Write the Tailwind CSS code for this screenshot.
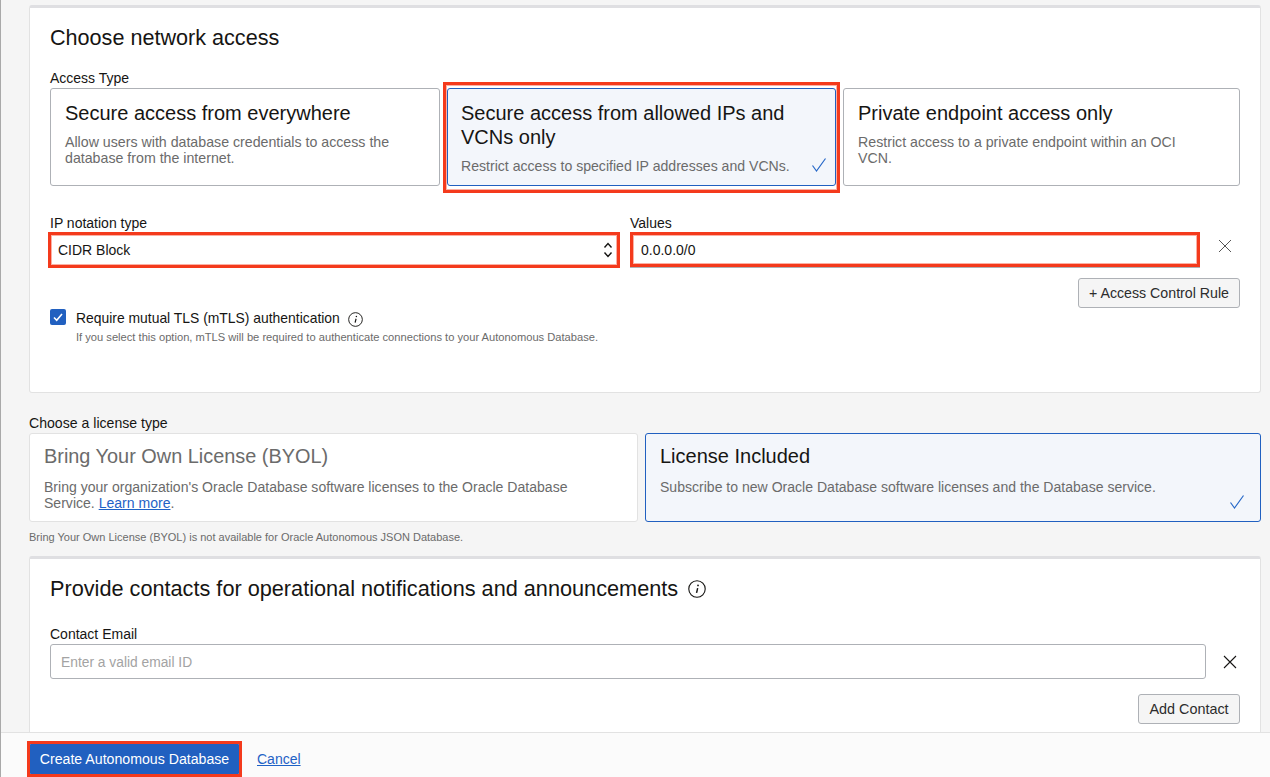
<!DOCTYPE html>
<html lang="en">
<head>
    <meta charset="UTF-8">
    <title>Create Autonomous Database</title>
    <script src="https://cdn.jsdelivr.net/npm/@tailwindcss/browser@4"></script>
</head>
<body class="bg-[#f5f5f5] font-['Liberation_Sans',Arial,sans-serif] text-[#161513]">
    <div class="h-[777px] flex flex-col overflow-hidden border-l border-[#a9a9a9]">
        <main class="flex-1 overflow-hidden pl-[28px] w-[1260px]">
            <!-- Network access -->
            <section class="mt-[5px] h-[388px] bg-white border border-[#e2e2e2] border-t-[3px] border-t-[#dfdfe2] rounded-[3px] px-[20px]">
                <h2 class="mt-[18px] text-[21.6px] leading-[24px]">Choose network access</h2>
                <div class="mt-[19px] text-[14px] leading-[18px]">Access Type</div>
                <div class="mt-px grid grid-cols-[390px_389px_397px] gap-[7px]">
                    <div class="h-[98px] bg-white border border-[#aeb1b6] rounded-[3px] px-[14px] pt-[12px]">
                        <div class="text-[20px] leading-[24px]">Secure access from everywhere</div>
                        <p class="mt-[9px] text-[14.2px] leading-[16px] text-[#6b6b6b]">Allow users with database credentials to access the database from the internet.</p>
                    </div>
                    <div class="relative h-[98px] bg-[#f3f6fb] border border-[#2160c0] rounded-[3px] pl-[13px] pr-[14px] pt-[12px]">
                        <div class="text-[20px] leading-[24px]">Secure access from allowed IPs and VCNs only</div>
                        <p class="mt-[9px] text-[14.1px] leading-[16px] text-[#6b6b6b]">Restrict access to specified IP addresses and VCNs.</p>
                        <svg class="absolute right-[8px] bottom-[12px] w-[16px] h-[16px]" viewBox="0 0 16 16" fill="none" stroke="#2668c8" stroke-width="1.2"><path d="M1.5 8.5l4 5.5L14.5 1.5"/></svg>
                        <span class="absolute -left-[5px] -right-[5px] -top-[7px] -bottom-[8px] border-[3px] border-[#f43a1c] shadow-[inset_0_0_0_1px_#f43a1c66]"></span>
                    </div>
                    <div class="h-[98px] bg-white border border-[#aeb1b6] rounded-[3px] px-[14px] pt-[12px]">
                        <div class="text-[20px] leading-[24px]">Private endpoint access only</div>
                        <p class="mt-[9px] text-[14.2px] leading-[16px] text-[#6b6b6b] w-[330px]">Restrict access to a private endpoint within an OCI VCN.</p>
                    </div>
                </div>

                <div class="mt-[28px] grid grid-cols-[566px_570px_1fr] gap-x-[14px]">
                    <div>
                        <div class="text-[14px] leading-[18px]">IP notation type</div>
                        <div class="relative mt-[3px] h-[30px] flex items-center justify-between pl-[8px] pr-[3px] text-[14px]">
                            <span>CIDR Block</span>
                            <svg class="w-[10px] h-[18px]" viewBox="0 0 10 18" fill="none" stroke="#161513" stroke-width="1.4"><path d="M1.5 6.5L5 2.5l3.5 4M1.5 11.5l3.5 4 3.5-4"/></svg>
                            <span class="absolute -left-[2px] -right-[4px] -top-[3px] -bottom-[3px] border-[3px] border-[#f43a1c] shadow-[inset_0_0_0_1px_#f43a1c66]"></span>
                        </div>
                    </div>
                    <div>
                        <div class="text-[14px] leading-[18px]">Values</div>
                        <div class="relative mt-[3px] h-[30px] flex items-center text-[14px]">
                            <span class="pl-[11px]">0.0.0.0/0</span>
                            <span class="absolute left-0 right-0 -top-[3px] -bottom-[2px] border-[3px] border-[#f43a1c] shadow-[inset_0_0_0_1px_#f43a1c66,0_1px_0_#aeb1b6]"></span>
                        </div>
                    </div>
                    <div class="pt-[21px] pl-[4px] flex items-center">
                        <svg class="w-[14px] h-[14px] -mt-[9px] shrink-0" viewBox="0 0 14 14" fill="none" stroke="#555" stroke-width="1"><path d="M1 1l12 12M13 1L1 13"/></svg>
                    </div>
                </div>

                <div class="mt-[13px] flex justify-end">
                    <button class="h-[30px] w-[162px] pt-[2px] bg-[#f5f5f5] border border-[#aeb1b6] rounded-[3px] text-[14.2px] text-[#2c2c2c]">+ Access Control Rule</button>
                </div>

                <div class="flex gap-[10px]">
                    <span class="mt-[1px] w-[16px] h-[16px] bg-[#2160c0] rounded-[2px] flex items-center justify-center">
                        <svg class="w-[12px] h-[12px]" viewBox="0 0 12 12" fill="none" stroke="#fff" stroke-width="1.6"><path d="M2 6.5l2.7 2.7L10 3"/></svg>
                    </span>
                    <div>
                        <div class="flex items-center gap-[8px] text-[13.9px] leading-[20px]">
                            Require mutual TLS (mTLS) authentication
                            <svg class="w-[15px] h-[15px] mt-[2px]" viewBox="0 0 16 16" fill="none" stroke="#161513"><circle cx="8" cy="8" r="7.3"/><path d="M8.6 7.2L7.6 11.4" stroke-width="1.3"/><circle cx="8.9" cy="4.8" r=".8" fill="#161513" stroke="none"/></svg>
                        </div>
                        <div class="mt-[1px] text-[11.15px] leading-[16px] text-[#6b6b6b]">If you select this option, mTLS will be required to authenticate connections to your Autonomous Database.</div>
                    </div>
                </div>
            </section>

            <!-- License type -->
            <div class="mt-[21px] text-[14.1px] leading-[18px]">Choose a license type</div>
            <div class="mt-px grid grid-cols-[609px_616px] gap-[7px]">
                <div class="h-[89px] bg-white border border-[#e2e2e2] rounded-[3px] px-[14px] pt-[10px]">
                    <div class="text-[19.9px] leading-[24px] text-[#6b6b6b]">Bring Your Own License (BYOL)</div>
                    <p class="mt-[11px] w-[540px] text-[14.05px] leading-[16px] text-[#6b6b6b]">Bring your organization's Oracle Database software licenses to the Oracle Database Service. <a href="#" class="text-[#1f62c6] underline">Learn more</a>.</p>
                </div>
                <div class="relative h-[89px] bg-[#f3f6fb] border border-[#2160c0] rounded-[3px] px-[14px] pt-[10px]">
                    <div class="text-[20px] leading-[24px]">License Included</div>
                    <p class="mt-[11px] text-[14.05px] leading-[16px] text-[#6b6b6b]">Subscribe to new Oracle Database software licenses and the Database service.</p>
                    <svg class="absolute right-[15px] bottom-[11px] w-[16px] h-[16px]" viewBox="0 0 16 16" fill="none" stroke="#2668c8" stroke-width="1.2"><path d="M1.5 8.5l4 5.5L14.5 1.5"/></svg>
                </div>
            </div>
            <div class="mt-[7px] text-[11px] leading-[16px] text-[#6b6b6b]">Bring Your Own License (BYOL) is not available for Oracle Autonomous JSON Database.</div>

            <!-- Contacts -->
            <section class="mt-[11px] h-[200px] bg-white border border-[#e2e2e2] border-t-[3px] border-t-[#dfdfe2] rounded-[3px] px-[20px]">
                <div class="mt-[18px] flex items-center gap-[10px] text-[21.7px] leading-[24px]">
                    <h2>Provide contacts for operational notifications and announcements</h2>
                    <svg class="w-[18px] h-[18px]" viewBox="0 0 16 16" fill="none" stroke="#161513"><circle cx="8" cy="8" r="7.3"/><path d="M8.6 7.2L7.6 11.4" stroke-width="1.3"/><circle cx="8.9" cy="4.8" r=".8" fill="#161513" stroke="none"/></svg>
                </div>
                <div class="mt-[24px] text-[14px] leading-[18px]">Contact Email</div>
                <div class="mt-px flex items-center">
                    <input type="text" placeholder="Enter a valid email ID" class="w-[1156px] h-[35px] pt-[2px] bg-white border border-[#aeb1b6] rounded-[3px] px-[10px] text-[13.8px] placeholder:text-[#a3a3a3]">
                    <svg class="ml-[17px] w-[14px] h-[14px]" viewBox="0 0 14 14" fill="none" stroke="#161513" stroke-width="1.1"><path d="M1 1l12 12M13 1L1 13"/></svg>
                </div>
                <div class="mt-[15px] flex justify-end">
                    <button class="h-[30px] w-[102px] pt-[2px] bg-[#f5f5f5] border border-[#aeb1b6] rounded-[3px] text-[14.4px] text-[#2c2c2c]">Add Contact</button>
                </div>
            </section>
        </main>

        <footer class="h-[45px] shrink-0 bg-[#fbfbfb] border-t border-[#e2e2e2] pl-[28px] flex items-center gap-[17px]">
            <button class="relative mt-[7px] h-[30px] w-[211px] pt-[2px] bg-[#2160c0] rounded-[2px] text-white text-[14.15px]">
                Create Autonomous Database
                <span class="absolute -left-[2px] -right-[2px] -top-[3px] -bottom-[3px] border-[3px] border-[#f43a1c]"></span>
            </button>
            <a href="#" class="mt-[9px] text-[14px] text-[#1f62c6] underline">Cancel</a>
        </footer>
    </div>
</body>
</html>
